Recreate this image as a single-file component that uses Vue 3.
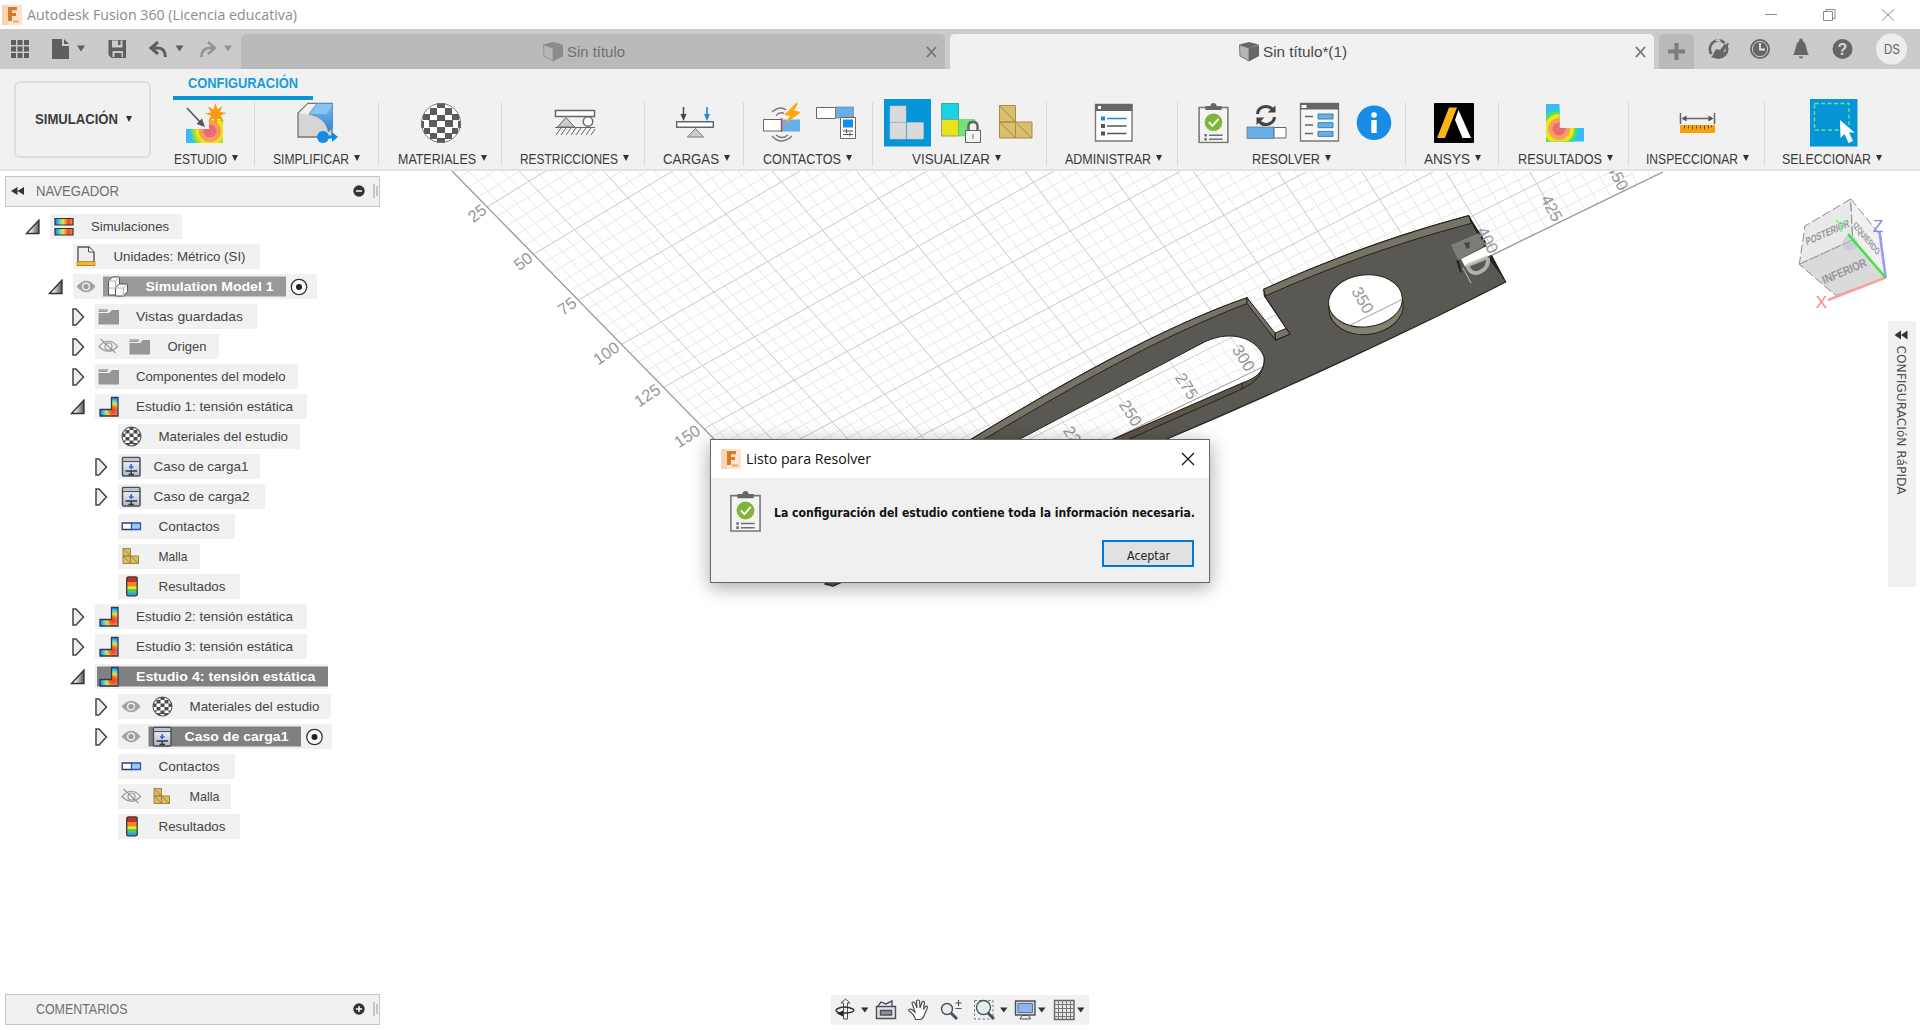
<script setup>
import { h } from 'vue'

// Single line of text fitted to a given width
const Txt = (p) =>
  h('svg', { width: p.w, height: 20, style: 'display:block;overflow:visible;flex:none' }, [
    h('text', {
      x: 0, y: 10 + p.s * 0.36, 'font-size': p.s, 'font-weight': p.b || 400, fill: p.c || '#3c3c3c',
      'font-family': p.f || 'Liberation Sans, Arial, sans-serif',
      textLength: p.w, lengthAdjust: 'spacingAndGlyphs'
    }, p.t)
  ])
Txt.props = ['t', 'w', 's', 'b', 'c', 'f']

const UI = 'Open Sans, Noto Sans, sans-serif'
const TA = 'DejaVu Sans, sans-serif'

// Ribbon groups: id, left edge, width, label, label width, label shift
const groups = [
  ['study', 160, 95, 'ESTUDIO', 53, -2], ['simplify', 255, 124, 'SIMPLIFICAR', 76, -1],
  ['materials', 379, 123, 'MATERIALES', 78, 1.5], ['restr', 502, 143, 'RESTRICCIONES', 98, 1],
  ['loads', 645, 99, 'CARGAS', 56, 1.5], ['contacts', 744, 129, 'CONTACTOS', 78, -1.5],
  ['view', 873, 174, 'VISUALIZAR', 78, -3.5], ['admin', 1047, 131, 'ADMINISTRAR', 86, 1],
  ['solve', 1178, 228, 'RESOLVER', 68, -0.5], ['ansys', 1406, 93, 'ANSYS', 46, 0],
  ['results', 1499, 130, 'RESULTADOS', 84, 1], ['inspect', 1629, 136, 'INSPECCIONAR', 92, 0],
  ['select', 1765, 135, 'SELECCIONAR', 89, -0.5]
].map(([id, x, w, label, lw, dx]) => ({ id, x, w, label, lw, dx }))

// Browser tree rows
const r = (x, w, icon, label, tx, tw, o = {}) => ({ x, w, icon, label, tx, tw, ...o })
const rows = [
  r(50, 132, 'sims', 'Simulaciones', 91.5, 78, { arrow: 'open' }),
  r(73, 187, 'units', 'Unidades: Métrico (SI)', 114, 132),
  r(73, 244, 'model', 'Simulation Model 1', 146, 128, { arrow: 'open', eye: 'on', sel: [103, 183, '#999'], radio: 299 }),
  r(95, 162, 'folder', 'Vistas guardadas', 136.5, 107, { arrow: 'shut' }),
  r(95, 124, 'folder', 'Origen', 168, 39, { arrow: 'shut', eye: 'off' }),
  r(95, 203, 'folder', 'Componentes del modelo', 136.5, 149.5, { arrow: 'shut' }),
  r(95, 212, 'static', 'Estudio 1: tensión estática', 136.5, 157, { arrow: 'open' }),
  r(118, 182, 'mat', 'Materiales del estudio', 159, 129.5),
  r(118, 142, 'load', 'Caso de carga1', 154, 95, { arrow: 'shut' }),
  r(118, 147, 'load', 'Caso de carga2', 154, 96, { arrow: 'shut' }),
  r(118, 117, 'contact', 'Contactos', 159, 61),
  r(118, 82, 'mesh', 'Malla', 159, 29),
  r(118, 122, 'result', 'Resultados', 159, 67),
  r(95, 212, 'static', 'Estudio 2: tensión estática', 136.5, 157, { arrow: 'shut' }),
  r(95, 212, 'static', 'Estudio 3: tensión estática', 136.5, 157, { arrow: 'shut' }),
  r(95, 233, 'static', 'Estudio 4: tensión estática', 136.5, 179.5, { arrow: 'open', sel: [97, 231, '#808080'] }),
  r(118, 213, 'mat', 'Materiales del estudio', 190, 130, { arrow: 'shut', eye: 'on' }),
  r(118, 214, 'load', 'Caso de carga1', 185, 104, { arrow: 'shut', eye: 'on', sel: [148.5, 152.5, '#808080'], radio: 314.5 }),
  r(118, 117, 'contact', 'Contactos', 159, 61),
  r(118, 113, 'mesh', 'Malla', 190, 30, { eye: 'off' }),
  r(118, 122, 'result', 'Resultados', 159, 67)
]
const ix = (n) => n.x + 3.5 + (n.eye ? 31 : 0)

// Ground plane: perspective fitted to [row, column, x, y] control points
const control = [
  [1, 1, 529, 181.7], [3, 1, 618.6, 276.7], [6, 1, 742.5, 406.7], [3, 4, 781, 181.7],
  [5, 4, 862.5, 277.3], [6, 5, 955.5, 292.7], [5, 7, 1034, 181.7], [8, 5, 1028.4, 381.7],
  [7, 8, 1166.4, 247.3], [7, 10, 1284.8, 183], [8, 9, 1257, 262.3], [8, 11, 1379, 199]
]
function fit(points) {
  const A = Array.from({ length: 8 }, () => Array(9).fill(0))
  for (const [u, v, x, y] of points) {
    const X = x / 1000, Y = y / 1000
    for (const e of [[u, v, 1, 0, 0, 0, -u * X, -v * X, X], [0, 0, 0, u, v, 1, -u * Y, -v * Y, Y]])
      for (let i = 0; i < 8; i++) for (let j = 0; j < 9; j++) A[i][j] += e[i] * e[j]
  }
  for (let i = 0; i < 8; i++) {
    let p = i
    for (let k = i + 1; k < 8; k++) if (Math.abs(A[k][i]) > Math.abs(A[p][i])) p = k
    ;[A[i], A[p]] = [A[p], A[i]]
    for (let k = 0; k < 8; k++) {
      if (k === i) continue
      const f = A[k][i] / A[i][i]
      for (let j = i; j < 9; j++) A[k][j] -= f * A[i][j]
    }
  }
  return A.map((row, i) => row[8] / row[i])
}
const m = fit(control)
const at = (u, v) => {
  const w = m[6] * u + m[7] * v + 1
  return [1000 * (m[0] * u + m[1] * v + m[2]) / w, 1000 * (m[3] * u + m[4] * v + m[5]) / w].map((n) => n.toFixed(1)).join(' ')
}
let minor = '', major = ''
for (let i = 0; i <= 52; i++) {
  const s = `M${at(i / 5, 0)}L${at(i / 5, 17)}`
  if (i % 5) minor += s
  else major += s
}
for (let i = 2; i <= 85; i++) {
  const s = `M${at(0, i / 5)}L${at(10.4, i / 5)}`
  if (i % 5) minor += s
  else major += s
}

const marks = [
  [25, 477, 213, -37], [50, 523, 261, -37], [75, 567, 306, -36], [100, 606, 353, -35], [125, 647, 395, -34], [150, 687, 436, -33],
  [225, 1075, 439, 58], [250, 1131, 413, 58], [275, 1187, 386, 58], [300, 1244, 358, 58], [350, 1363, 300, 60],
  [400, 1488, 240, 62], [425, 1552, 208, 62], [450, 1618, 177, 62]
]
</script>

<template>
  <div class="app">
    <svg width="0" height="0" class="defs">
      <defs>
        <radialGradient id="hot" cx=".74" cy=".72" r=".72">
          <stop offset="0" stop-color="#f2382c" /><stop offset=".3" stop-color="#f7702c" /><stop offset=".52" stop-color="#f8dc3a" />
          <stop offset=".74" stop-color="#44d6e4" /><stop offset="1" stop-color="#2a7cf0" />
        </radialGradient>
        <linearGradient id="bar"><stop offset="0" stop-color="#2a6cf0" /><stop offset=".25" stop-color="#40dcd0" /><stop offset=".45" stop-color="#f6e030" /><stop offset=".75" stop-color="#f2402c" /><stop offset="1" stop-color="#f6a030" /></linearGradient>
        <linearGradient id="dark"><stop offset=".3" stop-color="#eee" /><stop offset="1" stop-color="#555" /></linearGradient>
        <linearGradient id="bluefold" x2="0" y2="1"><stop offset="0" stop-color="#7bbcf0" /><stop offset="1" stop-color="#2f86cf" /></linearGradient>
        <linearGradient id="steel" x2="0" y2="1"><stop offset="0" stop-color="#fff" /><stop offset="1" stop-color="#aeb8c8" /></linearGradient>
        <clipPath id="ground"><path d="M452 171L843 571 1198 398 1349 325.700 1495.700 253.300 1663 172z" /></clipPath>
        <symbol id="logo" viewBox="0 0 20 20"><rect width="20" height="20" fill="#fbe3cd" /><path d="M0 0h6v20H0z" fill="#f9d5b5" /><path d="M6 2h9v3.200h-5V8h4v3h-4v5H6z" fill="#d97a28" /><path d="M11 15.500h6v2h-6z" fill="#f0a868" /></symbol>
        <symbol id="clip" viewBox="0 0 30 40"><path d="M.8 4.500h28.400v34.600H.8z" fill="#f4f4f4" stroke="#757575" stroke-width="1.500" /><path d="M7 3h5c0-4 6-4 6 0h5v4H7z" fill="#666" /><circle cx="15" cy="19" r="8.700" fill="#7fb53d" /><path d="M10.500 19l3.500 3.600 6-7" fill="none" stroke="#fff" stroke-width="1.800" /><path d="M6 30.500h2.500v2.500H6zM6 34.500h2.500V37H6zM10.500 31h13.500v1.500H10.500zM10.500 35h13.500v1.500H10.500z" fill="#707070" /></symbol>
        <symbol id="tabcube" viewBox="0 0 20 20"><path d="M.5 3L10 6v13L1 14z" fill="#b5b5b5" stroke="#777" /><path d="M10 6l10-3v11l-10 5.500zM0 2.500L10 0l10 2.500L10 6z" fill="#666" /></symbol>
      </defs>
    </svg>

    <header class="title">
      <svg width="20" height="20"><use href="#logo" /></svg>
      <Txt t="Autodesk Fusion 360 (Licencia educativa)" :w="270" :s="14.5" c="#8c8c8c" :f="UI" class="cap" />
      <svg class="winbtns" width="140" height="28" viewBox="1760 0 140 28" fill="none" stroke="#8a8a8a">
        <path d="M1765 13.500h12M1823.500 10.500h9v9h-9zM1826 10.500v-2h9v9h-2M1882 8.500l12 11M1894 8.500l-12 11" />
      </svg>
    </header>

    <nav class="tabs">
      <svg class="quick" width="241" height="40" viewBox="0 29 241 40" fill="#5f5f5f">
        <path d="M11 40h5v5h-5zM17.500 40h5v5h-5zM24 40h5v5h-5zM11 46.500h5v5h-5zM17.500 46.500h5v5h-5zM24 46.500h5v5h-5zM11 53h5v5h-5zM17.500 53h5v5h-5zM24 53h5v5h-5z" />
        <path d="M52 39h10v7h7v13H52zM64 39l5 5h-5zM77 45.500h8l-4 6z" />
        <path fill-rule="evenodd" d="M108.500 40h17.500v18h-14.500l-3-3zM112 40.500v7h10.500v-7h-2v4.500h-2.500v-4.500zM112.500 51v6h2v-4h7v4h1.500v-6z" />
        <path d="M158 42l-7 6 7 6M152 48h6q7 0 7.500 9" fill="none" stroke="#5f5f5f" stroke-width="3" />
        <path d="M175.500 45.500h8l-4 6z" />
        <g opacity=".5"><path d="M208 42l7 6-7 6M214 48h-5q-7 0-7.500 9" fill="none" stroke="#5f5f5f" stroke-width="2.600" /><path d="M224 45.500h8l-4 6z" /></g>
      </svg>
      <div class="tab off">
        <svg width="20" height="20" opacity=".55"><use href="#tabcube" /></svg>
        <Txt t="Sin título" :w="58" :s="15" c="#707070" />
        <svg class="x" width="12" height="12"><path d="M1 1l9 10M10 1l-9 10" /></svg>
      </div>
      <div class="tab on">
        <svg width="20" height="20"><use href="#tabcube" /></svg>
        <Txt t="Sin título*(1)" :w="84" :s="15" c="#484848" />
        <svg class="x" width="12" height="12"><path d="M1 1l9 10M10 1l-9 10" /></svg>
      </div>
      <div class="plus"><svg width="17" height="17"><path d="M8.500 0v17M0 8.500h17" stroke="#7d7d7d" stroke-width="4" /></svg></div>
      <svg width="226" height="40" viewBox="1694 29 226 40" fill="#666">
        <circle cx="1718.500" cy="49" r="8.700" fill="none" stroke="#666" stroke-width="2.700" />
        <path d="M1711 58l5-9 4 1 7-9 2 3-6 8 5-1-7 6h-5z" /><path d="M1716 41q4-3 4 3M1706 59l7-5M1730 39l-5 5" stroke="#cbcbcb" stroke-width="2" fill="none" />
        <circle cx="1760" cy="49" r="10" /><circle cx="1760" cy="49" r="7.700" fill="none" stroke="#cbcbcb" stroke-width="1" /><path d="M1760 43v6.500h5" fill="none" stroke="#e4e4e4" stroke-width="1.800" />
        <path d="M1793 55c3-3 2-12 6-13.500q0-3 2-3t2 3c4 1.500 3 10.500 6 13.500zM1798.500 56.500h5q-2.500 4-5 0z" />
        <circle cx="1842.500" cy="49" r="10" /><text x="1842.500" y="55" fill="#d6d6d6" font-family="Liberation Sans, sans-serif" font-size="16" font-weight="700" text-anchor="middle">?</text>
        <circle cx="1891.500" cy="49" r="15.500" fill="#ededed" /><text x="1884" y="54" font-family="Liberation Sans, sans-serif" font-size="14" textLength="16" lengthAdjust="spacingAndGlyphs" fill="#666">DS</text>
      </svg>
    </nav>

    <section class="ribbon">
      <button class="workspace">
        <Txt t="SIMULACIÓN" :w="83" :s="14.5" b="700" c="#3c3c3c" />
        <i class="caret"></i>
      </button>
      <div class="ribbon-main">
        <div class="rtab"><Txt t="CONFIGURACIÓN" :w="110" :s="14.5" b="700" c="#1a9cd8" /></div>
        <div class="groups">
          <div v-for="g in groups" :key="g.id" class="group" :style="{ width: g.w + 'px' }">
            <svg :width="g.w" height="54" :viewBox="`${g.x} 96 ${g.w} 54`">
              <g v-if="g.id === 'study'">
                <clipPath id="notch"><path d="M186 129h23v-9h14v23h-37z" /></clipPath>
                <g clip-path="url(#notch)"><rect x="186" y="119" width="38" height="25" fill="#3cb9f7" /><circle cx="210" cy="131" r="20" fill="#35d7b0" /><circle cx="210" cy="131" r="17.500" fill="#9be040" /><circle cx="210" cy="131" r="14.500" fill="#f3e312" /><circle cx="210" cy="131" r="11" fill="#f59c62" /><circle cx="210" cy="131" r="6.500" fill="#ea6b70" /></g>
                <path d="M187 108l14 15" stroke="#555" stroke-width="1.600" /><path d="M205 127l-8.500-3 5.500-5.500z" fill="#555" />
                <path d="M215.500 103l2 6.500 5-3.500-2.500 6 6.500 1-6 2.500 3.500 5.500-6-2.500-2 7-2.500-7-5.500 3 3-6-6.500-2 6.500-1-3-6 5.500 3z" fill="#f79c10" />
              </g>
              <g v-else-if="g.id === 'simplify'">
                <path d="M298 137v-24l10-9.500h24V137z" fill="#d5d5d5" stroke="#747474" stroke-width="1.300" /><path d="M299 113l9-9h8l-7 10.500z" fill="#f0f0f0" />
                <path d="M317 103.500h15.500V128l-4 4q-3-15-19.500-18z" fill="url(#bluefold)" stroke="#4a8ec4" stroke-width=".8" /><path d="M317 104h15l-5 10h-17z" fill="#85c4f4" /><circle cx="323" cy="137" r="6" fill="#158be8" /><path d="M327 135.500h5v-3.500l6 5-6 5v-3.500h-5z" fill="#158be8" />
              </g>
              <g v-else-if="g.id === 'materials'">
                <circle cx="441" cy="123" r="20" fill="#fff" />
                <path fill="#5c5c5c" d="M437 103h8v5h-8zM430 108h7v7h-7zM445 108h7v7h-7zM423 114h7v6h-7zM437 115h8v6h-8zM452 114h7v6h-7zM429 120h8v7h-8zM445 120h8v7h-8zM421 121h3v7h-3zM458 121h3v7h-3zM437 127h8v6h-8zM424 128h6v6h-6zM452 128h6v6h-6zM430 133h7v6h-7zM445 133h7v6h-7zM437 138h8v5h-8z" />
                <circle cx="441" cy="123" r="19.500" fill="none" stroke="#777" />
              </g>
              <g v-else-if="g.id === 'restr'" stroke="#666" fill="#fff">
                <path d="M555.500 110.500h39v6h-39z" stroke-width="1.500" /><path d="M566 117.500l8.500 9.500h-17z" fill="#ccc" /><circle cx="588" cy="121.500" r="4.700" stroke-width="1.500" />
                <path d="M555 127.500h40" /><path d="M556 135l5-7M561 135l5-7M566 135l5-7M571 135l5-7M576 135l5-7M581 135l5-7M586 135l5-7M591 135l4-6" />
              </g>
              <g v-else-if="g.id === 'loads'">
                <path d="M683.500 107v8" stroke="#555" stroke-width="1.600" /><path d="M680.500 114h6l-3 7z" fill="#444" /><path d="M707 107v8" stroke="#158be8" stroke-width="1.600" /><path d="M704 114h6l-3 7z" fill="#158be8" />
                <path d="M676.700 121.700h36.600v5.600h-36.600z" fill="#fff" stroke="#666" stroke-width="1.400" /><path d="M695.500 128.500l8 8.500h-16z" fill="#ccc" stroke="#777" />
              </g>
              <g v-else-if="g.id === 'contacts'">
                <path d="M763.500 119.500h18v11.500h-18z" fill="#fff" stroke="#666" /><path d="M781.500 119.500h18.500v12h-18.500z" fill="#67afe6" /><path d="M781.500 118v14" stroke="#c44" stroke-width="1.500" />
                <path d="M772 112q8-7 14-2M776 115.500q4-4 8-2M772 136q9 10 20 0M776 135q6 5 12 0" fill="none" stroke="#777" stroke-width="1.400" /><path d="M796 103l-12 12 6 1-6 9 17-13-7-1.500 4-7z" fill="#fba90f" />
                <path d="M816.500 107.500h19v11h-19z" fill="#fff" stroke="#666" /><path d="M835.500 107h18v11h-18z" fill="#67afe6" stroke="#777" stroke-width=".6" /><path d="M840.500 117.500h15v21h-15z" fill="#fff" stroke="#666" /><path d="M843 119.500h10v8h-10z" fill="#158be8" /><path d="M843 131h10M843 134.500h10M846.500 129v4M850 132.500v4" stroke="#555" />
              </g>
              <g v-else-if="g.id === 'view'">
                <path d="M884 99h47v47.500h-47z" fill="#0696d7" /><path d="M890 106h16v16h-16zM890 122.500h16v16.500h-16zM907 122.500h16.500V139H907z" fill="#dadada" stroke="#b4c4cc" stroke-width=".6" />
                <path d="M941.500 103.500h17v16h-17z" fill="#19d2e6" stroke="#3a9" /><path d="M941.500 119.500h17v16.500h-17z" fill="#e8e31a" stroke="#998" /><path d="M958.500 119.500H975V136h-16.500z" fill="#70e476" stroke="#5b6" stroke-width=".5" />
                <path d="M968.500 131v-5q0-4 4.500-4t4.500 4v5" fill="#f1f1f1" stroke="#666" stroke-width="2.400" /><rect x="965.500" y="130.500" width="15" height="12" fill="#f5f5f5" stroke="#666" /><path d="M973 134v5" stroke="#666" />
                <path d="M999.500 105.500h16V122h-16zM999.500 122h16v16h-16zM1015.500 122h16.500v16h-16.500z" fill="#d8be6e" stroke="#a98d43" /><path d="M999.500 105.500l16 16.500M999.500 122l16 16M1015.500 122l16 16" stroke="#a98d43" />
              </g>
              <g v-else-if="g.id === 'admin'">
                <path d="M1095.500 104.500h36.500v36.500h-36.500z" fill="#fff" stroke="#777" stroke-width="1.400" /><path d="M1095 104h37.500v7H1095z" fill="#666" /><path d="M1098 106h3v3h-3z" fill="#fff" />
                <path d="M1101 116.500h4v4h-4zM1107 117.700h19.500v1.500H1107z" fill="#158be8" /><path d="M1101 124h4v4h-4zM1107 125.200h19.500v1.500H1107zM1101 131.500h4v4h-4zM1107 132.700h19.500v1.500H1107z" fill="#555" />
              </g>
              <g v-else-if="g.id === 'solve'">
                <use href="#clip" x="1198" y="103" width="31" height="40.500" />
                <path d="M1257.500 114a8.500 8 0 0 1 15.500-4M1274.500 117a8.500 8 0 0 1-15.500 4" fill="none" stroke="#444" stroke-width="3" /><path d="M1275.500 105.500v7h-8zM1256.500 125v-7.500h8z" fill="#444" />
                <path d="M1247 127h27v11.500h-27z" fill="#67afe6" stroke="#777" stroke-width=".8" /><path d="M1274 127.500h12V138h-12z" fill="#fff" stroke="#666" />
                <path d="M1300.500 103.500h38V141h-38z" fill="#f7f7f7" stroke="#777" stroke-width="1.300" /><path d="M1300 103h39v6.500h-39z" fill="#666" /><path d="M1301.500 105h5v3h-5z" fill="#fff" /><path d="M1305 116.500h8M1305 125h8M1305 133.500h8" stroke="#666" stroke-width="1.400" /><path d="M1318 114h15v5h-15zM1318 122.700h15v5h-15zM1318 131.400h15v5h-15z" fill="#67afe6" stroke="#3b82ba" />
                <circle cx="1374" cy="122.700" r="17.300" fill="#178ce8" /><circle cx="1374" cy="115" r="2.800" fill="#fff" /><path d="M1371.300 120h5.400v13h-5.400z" fill="#fff" />
              </g>
              <g v-else-if="g.id === 'ansys'">
                <rect x="1434" y="103" width="40" height="40" rx="1" /><path d="M1449 107.500h8l-12 30.500h-8z" fill="#fdb41b" /><path d="M1458.500 110l12.500 28h-8.500l-7.500-18z" fill="#fff" />
              </g>
              <g v-else-if="g.id === 'results'">
                <clipPath id="lshape"><path d="M1546 104h13.500v24h24.500v13.500h-38z" /></clipPath>
                <g clip-path="url(#lshape)"><rect x="1546" y="104" width="38" height="38" fill="#3cb9f7" /><circle cx="1559" cy="129" r="20" fill="#25d5cf" /><circle cx="1559" cy="129" r="17.500" fill="#63dc50" /><circle cx="1559" cy="129" r="15" fill="#f0e516" /><circle cx="1559" cy="129" r="11" fill="#f59f62" /><circle cx="1559" cy="129" r="6.500" fill="#ea6b70" /></g>
              </g>
              <g v-else-if="g.id === 'inspect'">
                <path d="M1680.500 113v11M1714.500 113v11M1683 118.500h29" stroke="#666" stroke-width="1.500" /><path d="M1681.500 118.500l5-3v6zM1713.500 118.500l-5-3v6z" fill="#555" /><path d="M1680 125h35v8h-35z" fill="#f9a20c" /><path d="M1684.500 125.500v3M1688.500 125.500v3M1692.500 125.500v4M1696.500 125.500v3M1700.500 125.500v3M1704.500 125.500v4M1708.500 125.500v3M1711.500 125.500v2" stroke="#555" />
              </g>
              <g v-else>
                <path d="M1810 99h47.500v47.500H1810z" fill="#0696d7" /><path d="M1814.500 103.500H1849V130h-34.500z" fill="none" stroke="#6ee08f" stroke-width="1.300" stroke-dasharray="4 2.500" />
                <path d="M1840 120l.5 18 4-4 4 9 4.500-2-4-8.500h5.500z" fill="#fff" />
              </g>
            </svg>
            <div class="glabel" :style="{ marginLeft: g.dx * 2 + 'px' }"><Txt :t="g.label" :w="g.lw" :s="14" c="#3a3a3a" /><i class="caret"></i></div>
          </div>
        </div>
      </div>
    </section>

    <main class="canvas">
      <svg class="scene" width="1920" height="859" viewBox="0 171 1920 859">
        <g fill="none" clip-path="url(#ground)">
          <path :d="minor" stroke="#e7e7e7" />
          <path :d="major" stroke="#c8c8c8" />
        </g>
        <path d="M452 171L843 571 1198 398 1349 325.700 1495.700 253.300 1663 172" fill="none" stroke="#989898" stroke-width="1.300" />
        <path fill="#5a5852" stroke="#24231f" stroke-width="1.200" d="M825 584C860 505 910 475 970 440C1060 385 1160 328 1247 297.700L1275.600 340 1290 334 1264.500 296 1263.700 289.300C1330 259 1400 234 1468.700 215.700L1505.700 282C1420 326 1290 387 1164.600 440L833 586Z" />
        <clipPath id="slot"><path d="M1018 440L1205 341.700C1233 329 1257 339 1264 357C1265 368 1260 377 1242 383L1111 440Z" /></clipPath>
        <clipPath id="hole"><ellipse cx="1365.500" cy="301" rx="37" ry="26" transform="rotate(-6 1365 301)" /></clipPath>
        <path fill="#5e5549" stroke="#24231f" d="M1111 440L1242 383Q1264 373 1264.500 357Q1265 379 1242 389L1127 440Z" />
        <g clip-path="url(#slot)">
          <path d="M1000 300h300v150h-300z" fill="#fff" />
          <g clip-path="url(#ground)" fill="none"><path :d="minor" stroke="#ececec" /><path :d="major" stroke="#d0d0d0" /></g>
          <path d="M1111 440L1198 398 1349 325.700" stroke="#a0a0a0" />
        </g>
        <path d="M1018 440L1205 341.700C1233 329 1257 339 1264 357C1265 368 1260 377 1242 383L1111 440M1242 383v6" fill="none" stroke="#24231f" />
        <path fill="#777367" stroke="#24231f" d="M970 440C1060 385 1160 328 1247 297.700V303.500C1160 337 1080 382 983 440ZM1263.700 289.300C1330 259 1400 234 1468.700 215.700L1471.500 223.300C1400 242 1330 267 1265.500 296Z" />
        <path fill="#777367" stroke="#24231f" d="M1275.600 340L1275 333 1286 328.500 1290 334ZM1247 297.700L1275 333 1275.600 340 1247 303.500Z" />
        <ellipse cx="1366" cy="307" rx="37.300" ry="27.500" fill="#85806f" stroke="#24231f" transform="rotate(-6 1366 307)" />
        <ellipse cx="1365.500" cy="301" rx="37" ry="26" fill="#fff" stroke="#24231f" transform="rotate(-6 1365 301)" />
        <g clip-path="url(#hole)"><path d="M1349 325.700L1402 299.500" stroke="#a0a0a0" /></g>
        <path d="M1468.700 215.700L1471.500 223.300 1484 247 1486 242zM1489 259l3-4 14 27z" fill="#24231f" />
        <path d="M1451 245l28-12 5 13-26 14z" fill="#83837f" opacity=".85" /><path d="M1464 243l6-1-1 6-2 1z" fill="#444" />
        <path d="M1456 260l3 1 3 12-2-1z" fill="#222" />
        <path d="M1461 259l25-12.500 6 8-27 12z" fill="#fff" />
        <path d="M1467 265q4 11 13 7t8-14M1466 266l22-9" fill="none" stroke="#c6c6c4" stroke-width="4" opacity=".8" /><path d="M1463 268l8 15" stroke="#aaa" stroke-width="1.200" />
        <g font-family="Liberation Sans, sans-serif" font-size="16.500" fill="#979797" text-anchor="middle">
          <text v-for="k in marks" :key="k[0]" :x="k[1]" :y="k[2] + 6" :transform="`rotate(${k[3]} ${k[1]} ${k[2]})`">{{ k[0] }}</text>
        </g>

        <g stroke="#8d8d8d" stroke-dasharray="9 3" stroke-width="1">
          <path d="M1850.700 199L1805 226 1799.300 264.300 1852.700 240z" fill="#e9e9e9" /><path d="M1850.700 199L1881 236 1885.700 277.700 1852.700 240z" fill="#f0f0f0" /><path d="M1799.300 264.300L1852.700 240 1885.700 277.700 1836 295.700z" fill="#dadada" />
        </g>
        <circle cx="1850" cy="243" r="7.500" fill="#bcc4cc" opacity=".6" />
        <g font-family="Liberation Sans, sans-serif" font-weight="700" fill="#96989c" text-anchor="middle">
          <text transform="translate(1828 236) rotate(-24) skewX(-14)" font-size="10.500" textLength="47" lengthAdjust="spacingAndGlyphs">POSTERIOR</text>
          <text transform="translate(1846 275) rotate(-23)" font-size="12" textLength="47" lengthAdjust="spacingAndGlyphs">INFERIOR</text>
          <text transform="translate(1865 241) rotate(50) skewX(20)" font-size="8.500" textLength="38" lengthAdjust="spacingAndGlyphs">IZQUIERDO</text>
        </g>
        <path d="M1885.700 277.700L1879.500 232" stroke="#9a9af6" stroke-width="2.500" /><path d="M1885.700 277.700L1828 300" stroke="#f7a0a0" stroke-width="2.500" /><path d="M1885.700 277.700L1848 234" stroke="#45e045" stroke-width="2.500" />
        <g font-family="Liberation Sans, sans-serif" font-size="17" text-anchor="middle"><text x="1841" y="232" fill="#7bf07b">Y</text><text x="1878" y="232" fill="#8686f2">Z</text><text x="1821.500" y="308" fill="#fa8585">X</text></g>
      </svg>

      <aside class="browser">
        <div class="panel">
          <svg width="14" height="10"><path d="M6.500 1v8L0 5zM13 1v8L6.500 5z" fill="#333" /></svg>
          <Txt t="NAVEGADOR" :w="83" :s="14" c="#707070" />
          <svg class="end" width="28" height="16"><circle cx="8" cy="8" r="5.700" fill="#333" /><path d="M5 8h6" stroke="#fff" stroke-width="1.500" /><path d="M23 1v14M26 3v10" stroke="#999" /></svg>
        </div>
        <div v-for="(n, i) in rows" :key="i" class="row">
          <div class="twist" :style="{ width: n.x + 'px' }">
            <svg v-if="n.arrow === 'open'" width="16" height="16" class="open"><path d="M1.500 14.500L14 1v13.500z" fill="url(#dark)" stroke="#333" stroke-width="1.300" /></svg>
            <svg v-else-if="n.arrow" width="13" height="18"><path d="M1 1h3l7.500 8L4 17H1z" fill="#eee" stroke="#444" stroke-width="1.500" /></svg>
          </div>
          <div class="chip" :style="{ width: n.w + 'px' }">
            <svg :width="n.w" height="25" :viewBox="`${n.x} 0 ${n.w} 25`">
              <rect v-if="n.sel" :x="n.sel[0]" y="2.500" :width="n.sel[1]" height="20" :fill="n.sel[2]" />
              <g v-if="n.eye" :transform="`translate(${n.x + 3.5} 2)`">
                <g v-if="n.eye === 'on'"><path d="M0 10.500Q10-1 19 10.500Q10 22 0 10.500z" fill="#a2a2a2" /><circle cx="9.500" cy="10.500" r="4" fill="#eee" /><circle cx="9.500" cy="10.500" r="2.600" fill="#999" /></g>
                <g v-else fill="none" stroke="#999" stroke-width="1.200"><path d="M.5 10.500Q10 0 19 10.500Q10 20 .5 10.500z" /><circle cx="10" cy="10.500" r="3.500" /><path d="M2 3l15 14" /></g>
              </g>
              <g :transform="`translate(${ix(n)} 2)`">
                <g v-if="n.icon === 'sims'" stroke="#333" stroke-width="1.200" fill="url(#bar)"><path d="M1.500 2.500h18v6.500h-18z" /><path d="M1.500 12.500h18V19h-18z" /></g>
                <g v-else-if="n.icon === 'units'"><path d="M1.500 1h11l5 5v13h-16z" fill="#eceef4" stroke="#555" stroke-width="1.400" /><path d="M12 1v5h5.500" fill="#fff" stroke="#555" /><path d="M.5 15.500h18v4H.5z" fill="#eeb82c" stroke="#b4830e" stroke-width=".8" /></g>
                <g v-else-if="n.icon === 'model'" fill="#f8f9fc" stroke="#555"><path d="M1 5l4-4h7v10L8 19H1z" /><path d="M8 11.500l4-3.500h8v7.500L16 20H8z" /><path d="M8 12h8l4-4M16 12v8M1 5h7v7M8 5l4-4M1 12h7" fill="none" stroke="#b4b4b4" /></g>
                <g v-else-if="n.icon === 'folder'"><path d="M0 3h9l1.500 1.500H0z" fill="#b0b0b0" /><path d="M0 7h10.500l3-3H20.500v14.500H0z" fill="#979797" /><path d="M0 4.500h9.500L8.500 6H0z" fill="#979797" /></g>
                <g v-else-if="n.icon === 'static'"><path d="M1.500 13.500h11.500V1.500H19.500v18.500H1.500z" fill="url(#hot)" stroke="#2c3a50" stroke-width="1.300" /></g>
                <g v-else-if="n.icon === 'mat'"><circle cx="10" cy="10.500" r="9.500" fill="#fff" stroke="#555" stroke-width="1.100" /><path fill="#4c4c4c" d="M8 1h4v3H8zM4 4h4v3.500H4zM12 4h4v3.500h-4zM8 7.500h4V11H8zM1 7.500h3V11H1zM16 7.500h3V11h-3zM4 11h4v3.500H4zM12 11h4v3.500h-4zM8 14.500h4V18H8zM4.500 17H8v2H4.500zM12 17h3.500v2H12zM2 14.500h2V16H2zM16 14.500h2V16h-2z" /></g>
                <g v-else-if="n.icon === 'load'"><rect x="1" y="1.500" width="17.500" height="18.500" rx="1" fill="url(#steel)" stroke="#4a4f58" stroke-width="1.500" /><path d="M2 3.500h15.500" stroke="#bbc" stroke-width="2" /><path d="M1 5.500h17.500" stroke="#4a4f58" stroke-width="1.200" /><path d="M9.700 8v5M7.500 11h4.500" stroke="#2b62d8" stroke-width="1.500" /><path d="M4 15h11.500M7 18.500h5.500M9.700 15v3.500" stroke="#333" stroke-width="1.500" /></g>
                <g v-else-if="n.icon === 'contact'"><path d="M.7 7h9.500v6.500H.7z" fill="#fff" stroke="#2c4268" stroke-width="1.300" /><path d="M10 7h9v6.500h-9z" fill="#a3c4ec" stroke="#2856b4" stroke-width="1.300" /></g>
                <g v-else-if="n.icon === 'mesh'" fill="#d8be62" stroke="#a0873c"><path d="M1.500 2.500h7.500v7.500H1.500zM1.500 10h7.500v7.500H1.500zM9 10h8v7.500H9zM1.500 2.500L9 10M1.500 10L9 17.500M9 10l8 7.500" /></g>
                <g v-else><path d="M5.500 1h10v19h-10z" fill="#c92a2a" /><path d="M5.500 6h10v5h-10z" fill="#ee8a1e" /><path d="M5.500 10.500h10V13h-10z" fill="#f2e42c" /><path d="M5.500 13h10v4h-10z" fill="#4cd34c" /><path d="M5.500 16.500h10V20h-10z" fill="#2ca0ee" /><rect x="5.200" y=".9" width="10.500" height="19" rx="1.500" fill="none" stroke="#3a3a3a" stroke-width="1.300" /></g>
              </g>
              <text :x="n.tx - 0.5" y="17.300" font-family="Liberation Sans, Arial, sans-serif" font-size="13.500" :font-weight="n.sel ? 700 : 400" :fill="n.sel ? '#fff' : '#444'" :textLength="n.tw" lengthAdjust="spacingAndGlyphs">{{ n.label }}</text>
              <g v-if="n.radio"><circle :cx="n.radio" cy="13" r="7.700" fill="#fff" stroke="#333" stroke-width="1.300" /><circle :cx="n.radio" cy="13" r="3" fill="#222" /></g>
            </svg>
          </div>
        </div>
      </aside>

      <div class="panel comments">
        <Txt t="COMENTARIOS" :w="91.5" :s="14" c="#707070" class="ctext" />
        <svg class="end" width="28" height="16"><circle cx="8" cy="8" r="5.700" fill="#333" /><path d="M5 8h6M8 5v6" stroke="#fff" stroke-width="1.500" /><path d="M23 1v14M26 3v10" stroke="#999" /></svg>
      </div>

      <aside class="quickset">
        <svg width="28" height="266" viewBox="1888 321 28 266">
          <path d="M1901 330.500v9l-6.500-4.500zM1907.500 330.500v9l-6.500-4.500z" fill="#333" />
          <text transform="translate(1897 345.500) rotate(90)" font-family="DejaVu Sans, sans-serif" font-size="12" fill="#505050" textLength="149" lengthAdjust="spacingAndGlyphs">CONFIGURACIóN RáPIDA</text>
        </svg>
      </aside>

      <div class="navbar">
        <svg width="258" height="30" viewBox="831 995 258 30" fill="none" stroke="#4c5058" stroke-width="1.400">
          <path d="M843.500 1003h-2.500l4.500-4 4.500 4h-2.500v16h-4z" fill="#eee" stroke-width="1" /><path d="M841 1014q-8-3-3-5.500 7-3 15 .5 3 3-6 4h-8" stroke="#333" stroke-width="1.500" /><path d="M843 1010.500v6l-6-3z" fill="#222" stroke="none" />
          <path d="M876.500 1006.500h19v12h-19z" fill="#dcdfe4" /><path d="M880.500 1010.500h11v4.500h-11z" fill="#8b9099" /><path d="M878 1006l3-4 5 2 6-3v5" />
          <path d="M915 1018q-2-5-6-7-1-2 2-2l4 3-3-9q1-2 3 0l2 5-.5-7q1.500-2 3 0l.5 7 2-6q2-1.500 2.500.5l-1 7 2-3q2-1 2 1-2 5-3 7-1 4-4 5h-5z" fill="#fff" stroke-width="1.200" />
          <circle cx="947" cy="1009" r="5.500" fill="#e4eef2" /><path d="M951 1013l6 6" stroke-width="3" /><path d="M955.500 1003h6M958.500 1000v6M955.500 1008.500h6" stroke-width="1.100" />
          <path d="M974.500 1000.500h18.500v18.500h-18.500z" stroke="#777" stroke-dasharray="2.500 2" stroke-width="1" /><circle cx="983.500" cy="1007.500" r="7" fill="#e4eeee" /><path d="M988 1013l6 6" stroke-width="3" />
          <path d="M1015.500 1001h19.500v14h-19.500z" fill="#d5d9e0" /><path d="M1018 1003.500h14.500v9H1018z" fill="#8fb6e4" stroke="#4e74a8" stroke-width="1" /><path d="M1022 1015.500h6.500l2 3.500h-10.500z" fill="#eee" stroke-width="1" />
          <path d="M1054.500 1000.500h19.500v19h-19.500z" fill="#e6e6e6" stroke="#666" /><path d="M1058.500 1000v20M1062.500 1000v20M1066.500 1000v20M1070.500 1000v20M1054 1004.500h20M1054 1008.500h20M1054 1012.500h20M1054 1016.500h20" stroke="#777" stroke-width="1" />
          <path d="M861 1007.500h7.500l-3.700 5zM1000 1007.500h7.500l-3.700 5zM1038 1007.500h7.500l-3.700 5zM1077 1007.500h7.500l-3.700 5z" fill="#333" stroke="none" />
        </svg>
      </div>

      <div class="dialog">
        <div class="dtitle">
          <svg width="20" height="20"><use href="#logo" /></svg>
          <Txt t="Listo para Resolver" :w="125" :s="14.5" c="#111" :f="UI" />
          <svg class="dx" width="14" height="14"><path d="M1 1l12 12M13 1L1 13" stroke="#111" stroke-width="1.200" /></svg>
        </div>
        <div class="dbody">
          <svg width="31" height="41"><use href="#clip" width="31" height="41" /></svg>
          <Txt t="La configuración del estudio contiene toda la información necesaria." :w="421" :s="12.5" b="700" :f="TA" c="#111" class="dmsg" />
        </div>
        <div class="dfoot"><button><Txt t="Aceptar" :w="43" :s="12" :f="TA" c="#222" /></button></div>
      </div>
    </main>
  </div>
</template>

<style>
body { margin: 0; background: #fff; overflow: hidden; }
</style>

<style scoped>
.app { width: 1920px; height: 1030px; display: flex; flex-direction: column; background: #fff; overflow: hidden; font-family: "Liberation Sans", Arial, sans-serif; }
.app svg { display: block; flex: none; }
.defs { position: absolute; }
.title { height: 29px; display: flex; align-items: center; padding-left: 2px; box-sizing: border-box; flex: none; }
.cap { margin-left: 5px; }
.winbtns { margin-left: auto; margin-right: 20px; }
.tabs { height: 40px; background: #cbcbcb; display: flex; align-items: flex-end; flex: none; }
.tab { width: 704px; height: 35px; margin-right: 5px; border-radius: 5px 5px 0 0; display: flex; align-items: center; justify-content: center; gap: 4px; position: relative; box-sizing: border-box; }
.tab.off { background: #bababa; padding-right: 18px; }
.tab.on { background: #f1f1f1; padding-right: 18px; }
.tab .x { position: absolute; right: 7px; top: 12px; stroke: #757575; stroke-width: 1.8; }
.plus { width: 35px; height: 35px; background: #bababa; border-radius: 5px 5px 0 0; display: flex; align-items: center; justify-content: center; }
.ribbon { height: 102px; box-sizing: border-box; background: #f1f1f1; border-bottom: 2px solid #e2e2e2; display: flex; flex: none; }
.workspace { width: 137px; height: 77px; margin: 12px 0 0 14px; box-sizing: border-box; border: 2px solid #dedede; border-radius: 6px; background: #f1f1f1; display: flex; align-items: center; justify-content: center; gap: 8px; padding: 0 0 1px 1px; flex: none; }
.caret { width: 0; height: 0; border: 3.5px solid transparent; border-top: 6px solid #333; border-bottom: 0; flex: none; }
.ribbon-main { margin-left: 9px; }
.rtab { margin-left: 13px; width: 140px; height: 31px; box-sizing: border-box; border-bottom: 4px solid #0696d7; padding: 4px 0 0 14.5px; }
.groups { display: flex; margin-top: -4px; }
.group { height: 72px; box-sizing: border-box; display: flex; flex-direction: column; align-items: center; background: linear-gradient(#dadada, #dadada) right 6px / 1.5px 64px no-repeat; }
.group:last-child { background: none; }
.glabel { display: flex; align-items: center; gap: 5px; height: 18px; }
.glabel .caret { margin-top: -3px; }
.canvas { flex: 1; position: relative; overflow: hidden; }
.scene { position: absolute; left: 0; top: 0; }
.browser { position: absolute; left: 0; top: 5px; }
.panel { margin-left: 5px; width: 375px; height: 31px; box-sizing: border-box; border: 1px solid #c6c6c6; background: #f1f1f1; display: flex; align-items: center; padding: 0 0 1px 5px; gap: 11px; }
.panel .end { margin-left: auto; }
.browser .panel { margin-bottom: 7px; }
.row { display: flex; height: 25px; margin-bottom: 5px; align-items: center; }
.twist { display: flex; justify-content: flex-end; padding-right: 10px; box-sizing: border-box; }
.twist .open { margin-right: -1px; }
.chip { background: #f1f1f1; height: 25px; }
.comments { position: absolute; left: 0; top: 823px; }
.ctext { margin-left: 25px; }
.quickset { position: absolute; left: 1888px; top: 150px; width: 28px; height: 266px; background: #f1f1f1; }
.navbar { position: absolute; left: 831px; top: 824px; width: 258px; height: 30px; background: #f1f1f1; }
.dialog { position: absolute; left: 710px; top: 268px; width: 500px; height: 144px; box-sizing: border-box; border: 1px solid #666; background: #f0f0f0; box-shadow: 0 4px 18px rgba(0, 0, 0, .36); }
.dtitle { height: 38px; background: #fff; display: flex; align-items: center; padding: 0 14px 0 10px; gap: 5px; }
.dx { margin-left: auto; }
.dbody { display: flex; padding: 13px 0 0 19px; gap: 13px; }
.dmsg { margin-top: 11px; }
.dfoot { display: flex; justify-content: flex-end; padding-right: 15px; margin-top: 8px; }
.dfoot button { width: 92px; height: 27px; box-sizing: border-box; border: 2px solid #0078d7; background: #e1e1e1; padding: 4px 0 0; display: flex; align-items: center; justify-content: center; }
</style>
